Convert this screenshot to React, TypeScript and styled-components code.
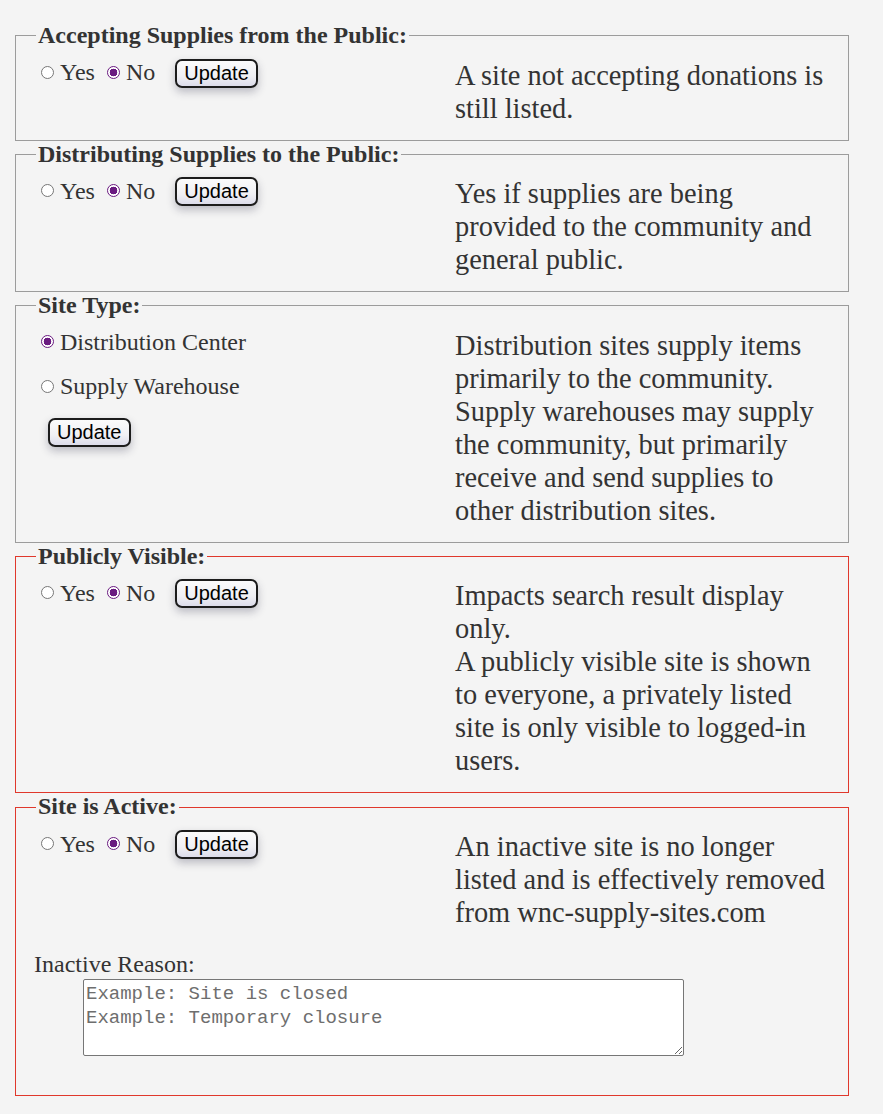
import React from "react";
import styled, { createGlobalStyle } from "styled-components";

const GlobalStyle = createGlobalStyle`
  html, body {
    margin: 0;
    padding: 0;
    background: #f4f4f4;
  }
  body {
    font-family: "Liberation Serif", "Times New Roman", serif;
    color: #333;
  }
`;

const Page = styled.div`
  padding: 22px 0 20px 15px;
  width: 834px;
`;

const Fieldset = styled.fieldset<{ $alert?: boolean }>`
  box-sizing: border-box;
  width: 834px;
  margin: 0;
  padding: 9px 20px 15px;
  border: 1px solid ${(p) => (p.$alert ? "#e0382c" : "#9c9c9c")};
  min-inline-size: 0;
`;

const Legend = styled.legend`
  padding: 0 2px;
  font-family: "Liberation Serif", "Times New Roman", serif;
  font-weight: bold;
  font-size: 24px;
  line-height: 27.6px;
  color: #333;
`;

const Columns = styled.div`
  display: grid;
  grid-template-columns: 419px 373px;
  align-items: start;
`;

const Controls = styled.div<{ $stacked?: boolean }>`
  display: flex;
  flex-direction: ${(p) => (p.$stacked ? "column" : "row")};
  align-items: ${(p) => (p.$stacked ? "flex-start" : "center")};
  gap: ${(p) => (p.$stacked ? "17px" : "0")};
  min-height: 29px;
`;

const Option = styled.label<{ $gapAfter?: number }>`
  display: inline-flex;
  align-items: center;
  gap: 6px;
  margin-right: ${(p) => p.$gapAfter ?? 0}px;
  font-size: 24px;
  line-height: 27.6px;
  color: #333;
  cursor: pointer;
`;

const Radio = styled.input.attrs({ type: "radio" })`
  appearance: none;
  -webkit-appearance: none;
  box-sizing: border-box;
  width: 13px;
  height: 13px;
  margin: 0 0 0 5px;
  border: 1px solid #767676;
  border-radius: 50%;
  background: #fff;
  position: relative;
  top: -1px;
  flex: none;
  &:checked {
    border-color: #6a1a80;
    background: radial-gradient(circle, #6a1a80 0 3.6px, #fff 4.1px);
  }
`;

const UpdateButton = styled.button<{ $indent?: number }>`
  margin-left: ${(p) => p.$indent ?? 0}px;
  padding: 1px 7px;
  font-family: "Liberation Sans", Arial, sans-serif;
  font-size: 20px;
  line-height: 23px;
  color: #000;
  background: linear-gradient(#fbfbfb 0%, #f0f0f4 60%, #dcdcea 100%);
  border: 2px solid #1c1c1c;
  border-radius: 7px;
  box-shadow: 0 4px 9px rgba(40, 40, 70, 0.28);
  cursor: pointer;
`;

const Description = styled.p`
  margin: 0;
  font-size: 28.4px;
  line-height: 33px;
  color: #333;
`;

const ReasonBlock = styled.div`
  display: flex;
  flex-direction: column;
  margin: 22px 0 24px -2px;
`;

const ReasonLabel = styled.label`
  font-size: 24px;
  line-height: 27.6px;
  color: #333;
`;

const ReasonInput = styled.textarea`
  box-sizing: border-box;
  width: 601px;
  height: 77px;
  margin: 0 0 0 49px;
  padding: 2px;
  border: 1px solid #767676;
  border-radius: 2px;
  background: #fff;
  font-family: "Liberation Mono", "DejaVu Sans Mono", monospace;
  font-size: 19px;
  line-height: 24.5px;
  color: #222;
  resize: both;
  &::placeholder {
    color: #6e6e6e;
  }
`;

type YesNoProps = {
  name: string;
  title: string;
  text: React.ReactNode;
  alert?: boolean;
  children?: React.ReactNode;
};

const YesNoSection = ({ name, title, text, alert, children }: YesNoProps) => (
  <Fieldset $alert={alert}>
    <Legend>{title}</Legend>
    <Columns>
      <Controls>
        <Option $gapAfter={7}>
          <Radio name={name} value="yes" />
          Yes
        </Option>
        <Option $gapAfter={20}>
          <Radio name={name} value="no" defaultChecked />
          No
        </Option>
        <UpdateButton type="button">Update</UpdateButton>
      </Controls>
      <Description>{text}</Description>
    </Columns>
    {children}
  </Fieldset>
);

export default function App() {
  return (
    <>
      <GlobalStyle />
      <Page>
        <YesNoSection
          name="accepting"
          title="Accepting Supplies from the Public:"
          text="A site not accepting donations is still listed."
        />
        <YesNoSection
          name="distributing"
          title="Distributing Supplies to the Public:"
          text="Yes if supplies are being provided to the community and general public."
        />
        <Fieldset>
          <Legend>Site Type:</Legend>
          <Columns>
            <Controls $stacked>
              <Option>
                <Radio name="siteType" value="distribution" defaultChecked />
                Distribution Center
              </Option>
              <Option>
                <Radio name="siteType" value="warehouse" />
                Supply Warehouse
              </Option>
              <UpdateButton type="button" $indent={12}>
                Update
              </UpdateButton>
            </Controls>
            <Description>
              Distribution sites supply items primarily to the community.
              Supply warehouses may supply the community, but primarily
              receive and send supplies to other distribution sites.
            </Description>
          </Columns>
        </Fieldset>
        <YesNoSection
          name="visible"
          title="Publicly Visible:"
          alert
          text={
            <>
              Impacts search result display only.
              <br />A publicly visible site is shown to everyone, a privately
              listed site is only visible to logged-in users.
            </>
          }
        />
        <YesNoSection
          name="active"
          title="Site is Active:"
          alert
          text="An inactive site is no longer listed and is effectively removed from wnc-supply-sites.com"
        >
          <ReasonBlock>
            <ReasonLabel htmlFor="inactiveReason">Inactive Reason:</ReasonLabel>
            <ReasonInput
              id="inactiveReason"
              placeholder={"Example: Site is closed\nExample: Temporary closure"}
            />
          </ReasonBlock>
        </YesNoSection>
      </Page>
    </>
  );
}
